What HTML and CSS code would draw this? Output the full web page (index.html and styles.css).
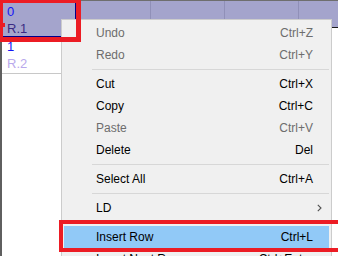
FILE: index.html
```html
<!DOCTYPE html>
<html>
  <head>
    <link rel="stylesheet" href="styles.css">
  </head>
  <body>
    <main class="sheet">
      <div class="grid">
        <div class="row first">
          <div class="cell selected">
            <span class="id">0</span>
            <span class="name">R.1</span>
          </div>
          <div class="head w75"></div>
          <div class="head w74"></div>
          <div class="head w74"></div>
          <div class="head rest"></div>
        </div>
        <div class="row">
          <div class="cell">
            <span class="id">1</span>
            <span class="name dim">R.2</span>
          </div>
        </div>
      </div>

      <ul class="menu">
        <li class="item disabled"><span class="label">Undo</span><span class="key">Ctrl+Z</span></li>
        <li class="item disabled"><span class="label">Redo</span><span class="key">Ctrl+Y</span></li>
        <li class="sep"></li>
        <li class="item"><span class="label">Cut</span><span class="key">Ctrl+X</span></li>
        <li class="item"><span class="label">Copy</span><span class="key">Ctrl+C</span></li>
        <li class="item disabled"><span class="label">Paste</span><span class="key">Ctrl+V</span></li>
        <li class="item"><span class="label">Delete</span><span class="key">Del</span></li>
        <li class="sep"></li>
        <li class="item"><span class="label">Select All</span><span class="key">Ctrl+A</span></li>
        <li class="sep"></li>
        <li class="item">
          <span class="label">LD</span>
          <svg class="arrow" width="5" height="8" viewBox="0 0 5 8"><path d="M0.8 0.8 L4 4 L0.8 7.2" fill="none" stroke="#505050" stroke-width="1.1"/></svg>
        </li>
        <li class="sep"></li>
        <li class="item active"><span class="label">Insert Row</span><span class="key">Ctrl+L</span></li>
        <li class="item"><span class="label">Insert Next Row</span><span class="key">Ctrl+Enter</span></li>
      </ul>

      <div class="caret"></div>
      <div class="mark mark-cell"></div>
      <div class="mark mark-item"></div>
    </main>
  </body>
</html>
```

FILE: styles.css
```css
body {
  margin: 0;
  overflow: hidden;
  font-family: "Liberation Sans", Arial, sans-serif;
}

.sheet {
  position: relative;
  width: 338px;
  height: 256px;
  overflow: hidden;
  background: #ffffff;
}

.grid {
  height: 256px;
  border-top: 1px solid #6e6e6e;
  border-left: 2px solid #5f5f5f;
}

.row {
  display: flex;
  align-items: flex-start;
}

.row.first {
  height: 36px;
  background: linear-gradient(#a4a4cc, #a4a4cc) top / 100% 27px no-repeat;
}

.cell {
  box-sizing: border-box;
  width: 74px;
  height: 37px;
  padding: 1px 5px;
  display: flex;
  flex-direction: column;
  font-size: 13px;
  line-height: 17px;
  border-bottom: 1px solid #c8c8c8;
}

.cell.selected {
  height: 36px;
  padding: 1px 4px;
  background: #a4a4cc;
  border: 1px solid #00008b;
}

.id {
  color: #1515f5;
}

.name {
  color: #3b2b84;
}

.name.dim {
  color: #b9a9ec;
}

.head {
  box-sizing: border-box;
  height: 27px;
  border-right: 1px solid #9090b8;
  border-bottom: 1px solid #1a1a1a;
}

.w75 { width: 75px; }
.w74 { width: 74px; }
.rest { flex: 1; border-right: none; }

.menu {
  position: absolute;
  left: 61px;
  top: 19px;
  box-sizing: border-box;
  width: 271px;
  margin: 0;
  padding: 2px 2px 0;
  list-style: none;
  background: #f0f0f0;
  border: 1px solid #cccccc;
  font-size: 12px;
  color: #000000;
}

.item {
  display: flex;
  align-items: center;
  height: 22px;
  padding: 0 16px 0 32px;
}

.item .label {
  flex: 1;
}

.item.disabled {
  color: #6d6d6d;
}

.item.active {
  background: #91c9f7;
}

.arrow {
  margin-right: -9px;
}

.sep {
  height: 1px;
  margin: 3px 0 3px 28px;
  background: #d7d7d7;
}

.mark {
  position: absolute;
  box-sizing: border-box;
  border: 4px solid #ec1c24;
}

.mark-cell {
  left: -2px;
  top: -2px;
  width: 83px;
  height: 44px;
  border-width: 5px;
}

.mark-item {
  left: 59px;
  top: 220px;
  width: 284px;
  height: 32px;
}

.caret {
  position: absolute;
  left: 3px;
  top: 23px;
  width: 2px;
  height: 4px;
  background: #ec1c24;
}
```
